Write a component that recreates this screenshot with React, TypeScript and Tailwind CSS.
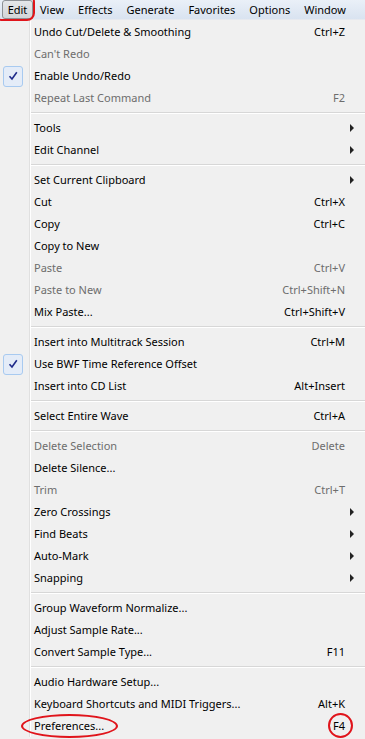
import React from "react";

type Item =
  | { sep: true }
  | {
      sep?: false;
      label: string;
      shortcut?: string;
      disabled?: boolean;
      checked?: boolean;
      submenu?: boolean;
    };

const items: Item[] = [
  { label: "Undo Cut/Delete & Smoothing", shortcut: "Ctrl+Z" },
  { label: "Can't Redo", disabled: true },
  { label: "Enable Undo/Redo", checked: true },
  { label: "Repeat Last Command", shortcut: "F2", disabled: true },
  { sep: true },
  { label: "Tools", submenu: true },
  { label: "Edit Channel", submenu: true },
  { sep: true },
  { label: "Set Current Clipboard", submenu: true },
  { label: "Cut", shortcut: "Ctrl+X" },
  { label: "Copy", shortcut: "Ctrl+C" },
  { label: "Copy to New" },
  { label: "Paste", shortcut: "Ctrl+V", disabled: true },
  { label: "Paste to New", shortcut: "Ctrl+Shift+N", disabled: true },
  { label: "Mix Paste...", shortcut: "Ctrl+Shift+V" },
  { sep: true },
  { label: "Insert into Multitrack Session", shortcut: "Ctrl+M" },
  { label: "Use BWF Time Reference Offset", checked: true },
  { label: "Insert into CD List", shortcut: "Alt+Insert" },
  { sep: true },
  { label: "Select Entire Wave", shortcut: "Ctrl+A" },
  { sep: true },
  { label: "Delete Selection", shortcut: "Delete", disabled: true },
  { label: "Delete Silence..." },
  { label: "Trim", shortcut: "Ctrl+T", disabled: true },
  { label: "Zero Crossings", submenu: true },
  { label: "Find Beats", submenu: true },
  { label: "Auto-Mark", submenu: true },
  { label: "Snapping", submenu: true },
  { sep: true },
  { label: "Group Waveform Normalize..." },
  { label: "Adjust Sample Rate..." },
  { label: "Convert Sample Type...", shortcut: "F11" },
  { sep: true },
  { label: "Audio Hardware Setup..." },
  { label: "Keyboard Shortcuts and MIDI Triggers...", shortcut: "Alt+K" },
  { label: "Preferences...", shortcut: "F4" },
];

const menus = ["View", "Effects", "Generate", "Favorites", "Options", "Window"];

function Check() {
  return (
    <div className="w-[20px] h-[21px] ml-[3px] rounded-[3px] border border-[#a8caf0] bg-[#e4ecf8] flex items-center justify-center">
      <svg width="10" height="10" viewBox="0 0 10 10">
        <path d="M1.5 5.2 L4 8 L8.8 1.2" fill="none" stroke="#1e2a8a" strokeWidth="1.6" />
      </svg>
    </div>
  );
}

export default function App() {
  return (
    <div
      className="relative w-[365px] h-[739px] overflow-hidden bg-[#f0f0f0] text-[11px] text-black"
      style={{ fontFamily: '"Noto Sans", "Open Sans", sans-serif' }}
    >
      {/* menu bar */}
      <div className="h-[20px] flex items-center bg-gradient-to-b from-[#eaf0f8] to-[#d9e3f0] border-b border-[#e6e9ef]">
        <div className="ml-[2px] h-[19px] w-[31px] flex items-center justify-center rounded-[3px] border border-[#8d9196] bg-gradient-to-b from-[#e4e6e9] to-[#d2d5d9] leading-none">
          Edit
        </div>
        {menus.map((m) => (
          <div key={m} className="px-[7px] leading-none">
            {m}
          </div>
        ))}
      </div>

      {/* menu body */}
      <div className="relative pt-[1px]">
        <div className="absolute left-[29px] top-0 bottom-0 w-[2px] border-l border-[#e0e0e0] bg-white" />
        {items.map((it, i) =>
          it.sep ? (
            <div key={i} className="h-[8px] flex items-center pl-[31px]">
              <div className="w-full h-[2px] border-t border-[#d7d7d7] bg-white" />
            </div>
          ) : (
            <div key={i} className="relative h-[22px] flex items-center">
              <div className="w-[30px] flex items-center">{it.checked && <Check />}</div>
              <div className={`pl-[4px] flex-1 whitespace-nowrap ${it.disabled ? "text-[#6d6d6d]" : ""}`}>
                {it.label}
              </div>
              {it.shortcut && (
                <div className={`whitespace-nowrap ${it.disabled ? "text-[#6d6d6d]" : ""}`}>{it.shortcut}</div>
              )}
              <div className="w-[20px] h-full flex items-center justify-end pr-[11px]">
                {it.submenu && (
                  <div className="w-0 h-0 border-y-[4px] border-y-transparent border-l-[4px] border-l-[#222]" />
                )}
              </div>
            </div>
          )
        )}
      </div>

      {/* red annotation marks */}
      <div className="absolute left-[-6px] top-[-6px] w-[41px] h-[27px] rounded-[8px] border-2 border-[#e0141b]" />
      <div className="absolute left-[21px] top-[714px] w-[97px] h-[24px] rounded-[50%] border-2 border-[#e0141b]" />
      <div className="absolute left-[328px] top-[713px] w-[25px] h-[25px] rounded-full border-2 border-[#e0141b]" />
    </div>
  );
}
